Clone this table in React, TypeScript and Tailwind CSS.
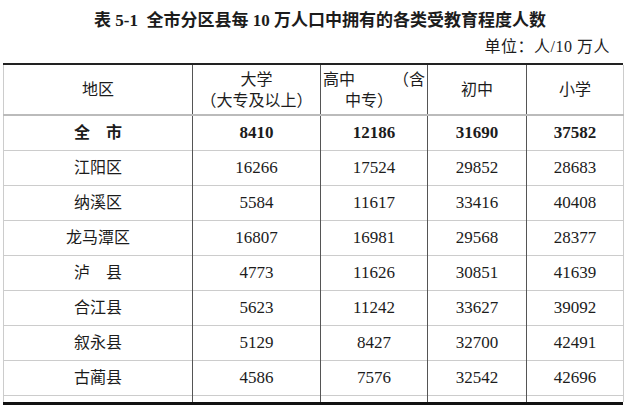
import React from 'react';

const rows = [
  { name: '全　市', v: ['8410', '12186', '31690', '37582'], bold: true },
  { name: '江阳区', v: ['16266', '17524', '29852', '28683'] },
  { name: '纳溪区', v: ['5584', '11617', '33416', '40408'] },
  { name: '龙马潭区', v: ['16807', '16981', '29568', '28377'] },
  { name: '泸　县', v: ['4773', '11626', '30851', '41639'] },
  { name: '合江县', v: ['5623', '11242', '33627', '39092'] },
  { name: '叙永县', v: ['5129', '8427', '32700', '42491'] },
  { name: '古蔺县', v: ['4586', '7576', '32542', '42696'] },
];

const font = { fontFamily: '"Liberation Serif", "Noto Sans CJK SC", serif' };

const App = () => {
  return (
    <div className="w-[640px] h-[414px] bg-white text-[#1c1c1c] overflow-hidden" style={font}>
      {/* 标题 */}
      <div className="pt-[11px] h-[38px] text-center text-[17px] font-bold leading-[20px] whitespace-pre">
        {'表 5-1  全市分区县每 10 万人口中拥有的各类受教育程度人数'}
      </div>
      <div className="h-[25px] flex justify-end pr-[30px] text-[16px] leading-[18px] tracking-[0.5px]">
        单位：人/10 万人
      </div>

      <div className="ml-[3px] w-[620px]">
        <div className="h-[2px] bg-[#222]" />
        <table className="w-full border-collapse table-fixed text-[16px]">
          <colgroup>
            <col className="w-[189px]" />
            <col className="w-[128px]" />
            <col className="w-[107px]" />
            <col className="w-[99px]" />
            <col className="w-[97px]" />
          </colgroup>
          <thead>
            <tr className="h-[50px] border-b-[2px] border-[#bbb]">
              <td className="text-center border-l border-l-[#ccc] border-r border-r-[#555]">地区</td>
              <td className="text-center border-r border-r-[#555] leading-[21px]">
                <div>大学</div>
                <div>（大专及以上）</div>
              </td>
              <td className="border-r border-r-[#555] leading-[21px] px-[2px]">
                <div className="flex justify-between">
                  <span>高中</span>
                  <span>（含</span>
                </div>
                <div className="pl-[22px]">中专）</div>
              </td>
              <td className="text-center border-r border-r-[#555]">初中</td>
              <td className="text-center border-r border-r-[#ccc]">小学</td>
            </tr>
          </thead>
          <tbody>
            {rows.map((r) => (
              <tr key={r.name} className="h-[35px] border-b border-[#ccc]">
                <td className="text-center border-l border-l-[#ccc] border-r border-r-[#555] text-[16px]">
                  <span className={r.bold ? 'font-bold' : ''}>{r.name}</span>
                </td>
                {r.v.map((x, i) => (
                  <td
                    key={i}
                    className={`text-center text-[17px] ${r.bold ? 'font-bold' : ''} ${
                      i === 3 ? 'border-r border-r-[#ccc]' : 'border-r border-r-[#555]'
                    }`}
                  >
                    {x}
                  </td>
                ))}
              </tr>
            ))}
            <tr className="h-[7px]">
              <td className="border-l border-l-[#ccc] border-r border-r-[#555]" />
              <td className="border-r border-r-[#555]" />
              <td className="border-r border-r-[#555]" />
              <td className="border-r border-r-[#555]" />
              <td className="border-r border-r-[#ccc]" />
            </tr>
          </tbody>
        </table>
        <div className="h-[3px] bg-[#111]" />
      </div>
    </div>
  );
};

export default App;
